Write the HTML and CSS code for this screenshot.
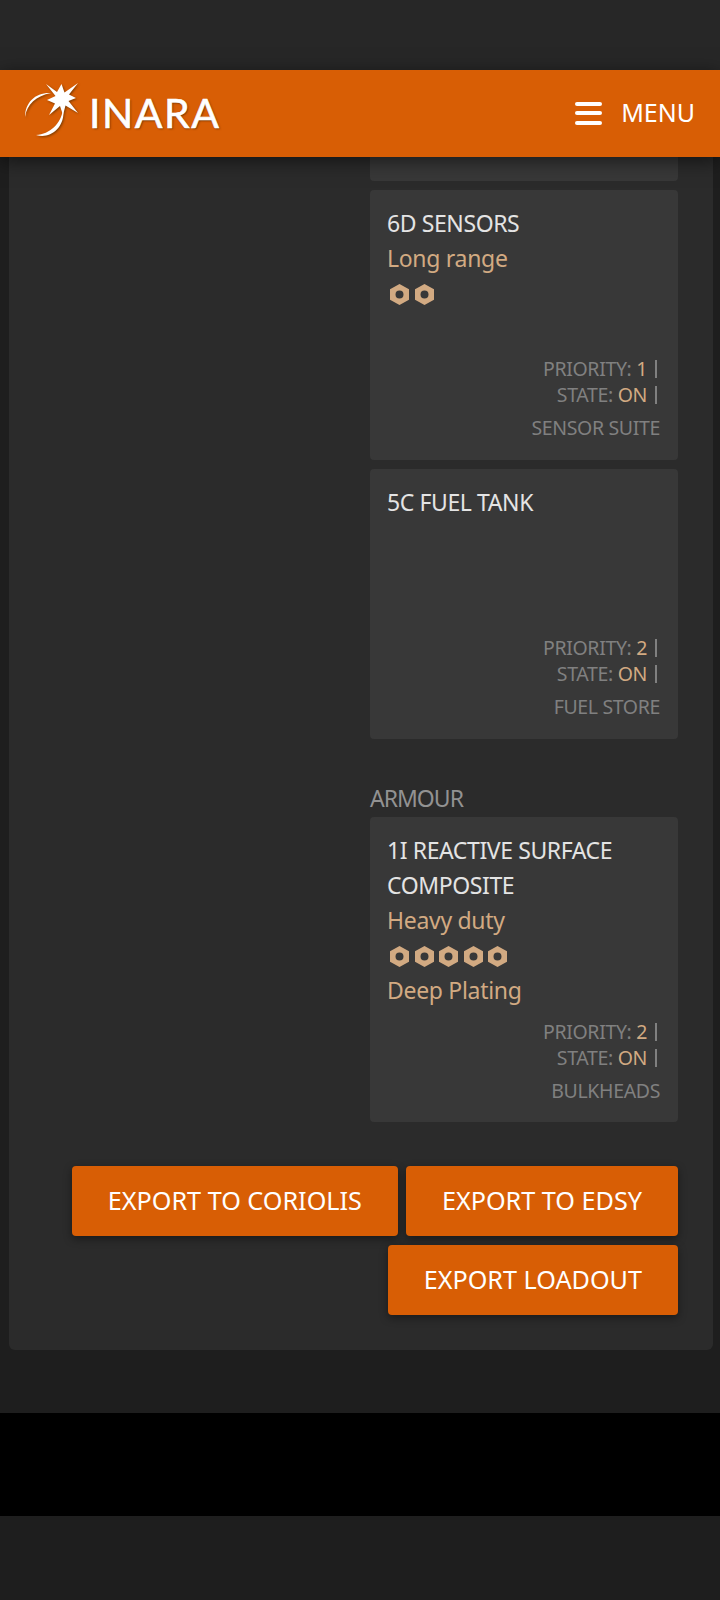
FILE: index.html
```html
<!DOCTYPE html>
<html lang="en">
<head>
  <meta charset="UTF-8">
  <title>Inara</title>
  <link rel="stylesheet" href="styles.css">
</head>
<body>
  <div class="top-strip"></div>
  <header class="site-header">
    <a class="logo" href="#">
      <svg class="logo-mark" viewBox="0 0 60 60" width="60" height="60">
        <polygon fill="#fff" points="41.5,4 44.5,12.5 58,3 49,14.5 56,18 48.5,21 58,33 45.5,25.5 43,35 40,26 29,35 35,23.5 27,20 35.5,16 26,4 37,12"/>
        <path fill="#fff" d="M31 13C16 12 5 22 5 37C7 24 16 16 31 13Z"/>
        <path fill="#fff" d="M16 55C30 60 46 47 43 29C41 44 30 54 16 55Z"/>
      </svg>
      <span class="logo-text">INARA</span>
    </a>
    <a class="menu-toggle" href="#">
      <span class="burger"><i></i><i></i><i></i></span>
      <span class="menu-label">MENU</span>
    </a>
  </header>

  <main class="panel">
    <div class="module-col">
      <div class="card card-cut"></div>

      <div class="card">
        <div class="mod-name">6D SENSORS</div>
        <div class="mod-eng">Long range</div>
        <div class="grades">
          <svg class="grade" viewBox="0 0 19 21"><path fill-rule="evenodd" d="M9.5 0L19 5.2V15.8L9.5 21L0 15.8V5.2ZM9.5 6.5A4 4 0 1 0 9.5 14.5A4 4 0 1 0 9.5 6.5Z"/></svg>
          <svg class="grade" viewBox="0 0 19 21"><path fill-rule="evenodd" d="M9.5 0L19 5.2V15.8L9.5 21L0 15.8V5.2ZM9.5 6.5A4 4 0 1 0 9.5 14.5A4 4 0 1 0 9.5 6.5Z"/></svg>
        </div>
        <div class="mod-meta">
          <div class="meta-line">PRIORITY: <b>1</b><span class="pipe"></span></div>
          <div class="meta-line">STATE: <b>ON</b><span class="pipe"></span></div>
          <div class="mod-type">SENSOR SUITE</div>
        </div>
      </div>

      <div class="card">
        <div class="mod-name">5C FUEL TANK</div>
        <div class="mod-meta">
          <div class="meta-line">PRIORITY: <b>2</b><span class="pipe"></span></div>
          <div class="meta-line">STATE: <b>ON</b><span class="pipe"></span></div>
          <div class="mod-type">FUEL STORE</div>
        </div>
      </div>

      <h3 class="group-title">ARMOUR</h3>
      <div class="card card-auto">
        <div class="mod-name">1I REACTIVE SURFACE COMPOSITE</div>
        <div class="mod-eng">Heavy duty</div>
        <div class="grades">
          <svg class="grade" viewBox="0 0 19 21"><path fill-rule="evenodd" d="M9.5 0L19 5.2V15.8L9.5 21L0 15.8V5.2ZM9.5 6.5A4 4 0 1 0 9.5 14.5A4 4 0 1 0 9.5 6.5Z"/></svg>
          <svg class="grade" viewBox="0 0 19 21"><path fill-rule="evenodd" d="M9.5 0L19 5.2V15.8L9.5 21L0 15.8V5.2ZM9.5 6.5A4 4 0 1 0 9.5 14.5A4 4 0 1 0 9.5 6.5Z"/></svg>
          <svg class="grade" viewBox="0 0 19 21"><path fill-rule="evenodd" d="M9.5 0L19 5.2V15.8L9.5 21L0 15.8V5.2ZM9.5 6.5A4 4 0 1 0 9.5 14.5A4 4 0 1 0 9.5 6.5Z"/></svg>
          <svg class="grade" viewBox="0 0 19 21"><path fill-rule="evenodd" d="M9.5 0L19 5.2V15.8L9.5 21L0 15.8V5.2ZM9.5 6.5A4 4 0 1 0 9.5 14.5A4 4 0 1 0 9.5 6.5Z"/></svg>
          <svg class="grade" viewBox="0 0 19 21"><path fill-rule="evenodd" d="M9.5 0L19 5.2V15.8L9.5 21L0 15.8V5.2ZM9.5 6.5A4 4 0 1 0 9.5 14.5A4 4 0 1 0 9.5 6.5Z"/></svg>
        </div>
        <div class="mod-eng">Deep Plating</div>
        <div class="mod-meta">
          <div class="meta-line">PRIORITY: <b>2</b><span class="pipe"></span></div>
          <div class="meta-line">STATE: <b>ON</b><span class="pipe"></span></div>
          <div class="mod-type">BULKHEADS</div>
        </div>
      </div>
    </div>

    <div class="export-row">
      <a class="btn" href="#">EXPORT TO CORIOLIS</a>
      <a class="btn" href="#">EXPORT TO EDSY</a>
      <a class="btn" href="#">EXPORT LOADOUT</a>
    </div>
  </main>

  <div class="ad-band"></div>
</body>
</html>
```

FILE: styles.css
```css
* {
  box-sizing: border-box;
  margin: 0;
  padding: 0;
}
html, body {
  height: 100%;
}
body {
  background: #1e1e1e;
  font-family: "Noto Sans", "Open Sans", sans-serif;
  color: #e0e0e0;
  overflow: hidden;
}
a {
  text-decoration: none;
  color: inherit;
}

.top-strip {
  height: 70px;
  background: #272727;
}

/* header */
.site-header {
  position: relative;
  z-index: 2;
  height: 87px;
  background: #d85e05;
  box-shadow: 0 4px 18px rgba(0, 0, 0, 0.55);
  display: flex;
  align-items: center;
  justify-content: space-between;
  padding: 0 25px 0 20px;
  color: #fff;
}
.logo {
  display: flex;
  align-items: center;
}
.logo-mark {
  display: block;
  margin-top: -8px;
  filter: drop-shadow(1px 1px 1px #7a3a00);
}
.logo-text {
  font-family: Lato, sans-serif;
  font-size: 41px;
  font-weight: 400;
  letter-spacing: 1.5px;
  line-height: 1;
  margin: -2px 0 0 9px;
  -webkit-text-stroke: 0.6px #fff;
  text-shadow: 1px 1px 2px #6e3300;
}
.menu-toggle {
  display: flex;
  align-items: center;
  gap: 19px;
}
.burger {
  display: flex;
  flex-direction: column;
  gap: 5.5px;
  width: 27px;
  margin-top: -1px;
}
.burger i {
  display: block;
  height: 4px;
  background: #fff;
  border-radius: 2px;
}
.menu-label {
  font-size: 25px;
  line-height: 1;
  margin-top: -2px;
}

/* main panel */
.panel {
  margin: 0 7px 0 9px;
  height: 1193px;
  background: #2b2b2b;
  border-radius: 0 0 6px 6px;
  padding: 0 35px 0 0;
}
.module-col {
  width: 308px;
  margin-left: auto;
  display: flex;
  flex-direction: column;
  gap: 9px;
}
.card {
  height: 270px;
  background: #383838;
  border-radius: 4px;
  padding: 16px 18px 19px 17px;
  display: flex;
  flex-direction: column;
}
.card-cut {
  height: 24px;
  padding: 0;
  border-radius: 0 0 4px 4px;
}
.card-auto {
  height: 305px;
  padding-bottom: 18px;
}
.mod-name {
  font-size: 23px;
  letter-spacing: -0.4px;
  line-height: 35px;
  color: #e4e4e4;
}
.mod-eng {
  font-size: 23px;
  letter-spacing: -0.3px;
  line-height: 35px;
  color: #d2aa82;
}
.grades {
  display: flex;
  gap: 5.5px;
  height: 35px;
  align-items: center;
  padding: 2px 0 0 3px;
}
.grade {
  width: 19px;
  height: 21px;
  fill: #d2aa82;
}
.mod-meta {
  margin-top: auto;
  text-align: right;
  color: #808080;
  font-size: 19.5px;
  letter-spacing: -0.35px;
}
.meta-line {
  line-height: 26px;
  display: flex;
  justify-content: flex-end;
  align-items: center;
  white-space: pre;
}
.meta-line b {
  font-weight: 400;
  color: #d2aa82;
}
.pipe {
  width: 2px;
  height: 18px;
  background: #808080;
  margin: 0 3px 0 8px;
}
.mod-type {
  line-height: 26px;
  margin-top: 7px;
}
.group-title {
  font-size: 23px;
  letter-spacing: -1px;
  font-weight: 400;
  color: #929292;
  line-height: 30px;
  margin: 35px 0 -5px;
}

/* export buttons */
.export-row {
  display: flex;
  flex-wrap: wrap;
  justify-content: flex-end;
  gap: 9px 8px;
  margin-top: 44px;
}
.btn {
  height: 70px;
  display: flex;
  align-items: center;
  padding: 0 36px 2px;
  background: #d85e05;
  color: #fff;
  font-size: 25.2px;
  border-radius: 4px;
  box-shadow: 0 3px 8px rgba(0, 0, 0, 0.4);
}

.ad-band {
  height: 103px;
  margin-top: 63px;
  background: #000;
}
```
